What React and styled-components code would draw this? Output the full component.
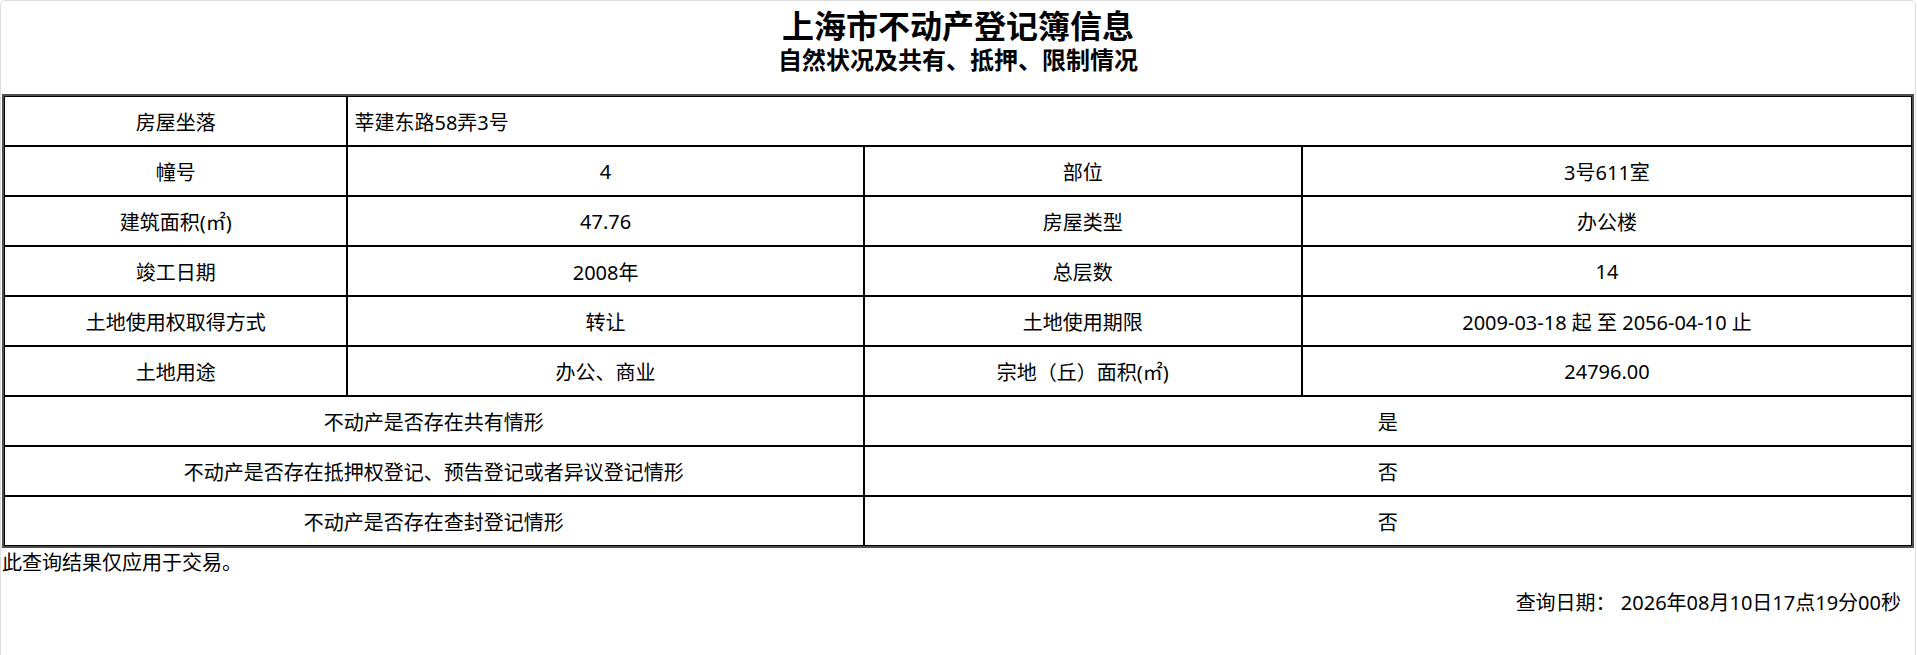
import styled, { createGlobalStyle } from 'styled-components'

const GlobalStyle = createGlobalStyle`
  html, body {
    margin: 0;
    padding: 0;
    background: #fff;
    overflow: hidden;
  }
  body {
    font-family: "Noto Sans", "Noto Sans CJK SC", sans-serif;
    color: #000;
  }
`

const Page = styled.div`
  box-sizing: border-box;
  min-height: 690px;
  margin-right: 1px;
  padding: 0 1px;
  border: 1px solid #dedede;
  border-radius: 5px;
`

const Header = styled.div`
  padding-top: 5px;
  margin-bottom: 20px;
  text-align: center;
  font-family: "Noto Sans CJK SC", sans-serif;
  font-weight: 700;
`

const Title = styled.h1`
  margin: 0;
  font-size: 32px;
  line-height: 36px;
  font-weight: 700;
`

const SubTitle = styled.h2`
  margin: 2px 0 0;
  font-size: 24px;
  line-height: 30px;
  font-weight: 700;
`

const Table = styled.table`
  width: 100%;
  table-layout: fixed;
  border: 2px solid #4f4f4f;
  border-spacing: 0;
  font-size: 20px;
`

const Cell = styled.td`
  box-sizing: border-box;
  height: 50px;
  padding: 0 6px;
  border: 1px solid #000;
  text-align: ${p => (p.$left ? 'left' : 'center')};
  vertical-align: middle;
  white-space: nowrap;
`

const Note = styled.div`
  font-size: 20px;
  line-height: 29px;
`

const QueryDate = styled.div`
  margin-top: 11px;
  padding-right: 13px;
  font-size: 20px;
  line-height: 29px;
  text-align: right;
`

const pairRows = [
  ['幢号', '4', '部位', '3号611室'],
  ['建筑面积(㎡)', '47.76', '房屋类型', '办公楼'],
  ['竣工日期', '2008年', '总层数', '14'],
  ['土地使用权取得方式', '转让', '土地使用期限', '2009-03-18 起 至 2056-04-10 止'],
  ['土地用途', '办公、商业', '宗地（丘）面积(㎡)', '24796.00'],
]

const statusRows = [
  ['不动产是否存在共有情形', '是'],
  ['不动产是否存在抵押权登记、预告登记或者异议登记情形', '否'],
  ['不动产是否存在查封登记情形', '否'],
]

const App = () => {
  return (
    <>
      <GlobalStyle />
      <Page>
        <Header>
          <Title>上海市不动产登记簿信息</Title>
          <SubTitle>自然状况及共有、抵押、限制情况</SubTitle>
        </Header>
        <Table>
          <colgroup>
            <col style={{ width: '18%' }} />
            <col style={{ width: '27.06%' }} />
            <col style={{ width: '22.97%' }} />
            <col style={{ width: '31.97%' }} />
          </colgroup>
          <tbody>
            <tr>
              <Cell>房屋坐落</Cell>
              <Cell $left colSpan={3}>莘建东路58弄3号</Cell>
            </tr>
            {pairRows.map((r) => (
              <tr key={r[0]}>
                {r.map((c, i) => <Cell key={i}>{c}</Cell>)}
              </tr>
            ))}
            {statusRows.map(([label, value]) => (
              <tr key={label}>
                <Cell colSpan={2}>{label}</Cell>
                <Cell colSpan={2}>{value}</Cell>
              </tr>
            ))}
          </tbody>
        </Table>
        <Note>此查询结果仅应用于交易。</Note>
        <QueryDate>查询日期： 2026年08月10日17点19分00秒</QueryDate>
      </Page>
    </>
  )
}

export default App
